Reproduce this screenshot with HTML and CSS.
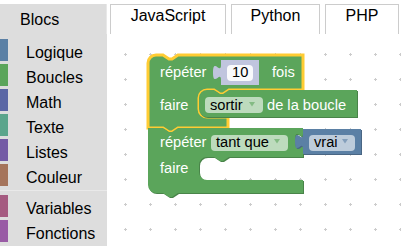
FILE: index.html
```html
<!DOCTYPE html>
<html lang="fr">
<head>
<meta charset="utf-8">
<title>Blockly</title>
<link rel="stylesheet" href="styles.css">
</head>
<body>
<div class="tabs">
  <div class="tab tab-on">Blocs</div>
  <div class="tab tab-js">JavaScript</div>
  <div class="tab tab-py">Python</div>
  <div class="tab tab-php">PHP</div>
</div>
<div class="main">
  <div class="toolbox">
    <div class="cat cat-logic">Logique</div>
    <div class="cat cat-loops">Boucles</div>
    <div class="cat cat-math">Math</div>
    <div class="cat cat-text">Texte</div>
    <div class="cat cat-lists">Listes</div>
    <div class="cat cat-colour">Couleur</div>
    <div class="sep"></div>
    <div class="cat cat-vars">Variables</div>
    <div class="cat cat-procs">Fonctions</div>
  </div>
  <div class="workspace">
    <svg class="ws-svg" width="294" height="212" viewBox="107 34 294 212" xmlns="http://www.w3.org/2000/svg">
      <defs>
        <pattern id="grid" patternUnits="userSpaceOnUse" width="25" height="25" x="124" y="53">
          <path d="M0 1.5h3M1.5 0v3" stroke="#ccc" stroke-width="1"/>
        </pattern>
      </defs>
      <rect x="107" y="34" width="294" height="212" fill="url(#grid)"/>

      <!-- block 1 : répéter 10 fois -->
      <path class="dark-green" transform="translate(1,1)" d="M148,63 A8,8 0 0 1 156,55 H163 l6,4 h3 l6,-4 H303 V90 H229 l-6,4 h-3 l-6,-4 H207 A8,8 0 0 0 199,98 V109 A8,8 0 0 0 207,117 H228 V128 H178 l-6,4 h-3 l-6,-4 H148 Z"/>
      <path class="green selected" d="M148,63 A8,8 0 0 1 156,55 H163 l6,4 h3 l6,-4 H303 V90 H229 l-6,4 h-3 l-6,-4 H207 A8,8 0 0 0 199,98 V109 A8,8 0 0 0 207,117 H228 V128 H178 l-6,4 h-3 l-6,-4 H148 Z"/>
      <text class="lbl" x="160" y="77">répéter</text>
      <path class="shadow" d="M221,60 H259 V85 H221 V80 c0,-10 -8,8 -8,-7.5 s8,2.5 8,-7.5 Z"/>
      <rect class="pill pill-num" x="227" y="65" width="26" height="16" rx="4"/>
      <text class="val" x="232" y="77">10</text>
      <text class="lbl" x="272" y="77">fois</text>
      <text class="lbl" x="160" y="110">faire</text>

      <!-- sortir de la boucle -->
      <path class="dark-green" transform="translate(1,1)" d="M199,98 A8,8 0 0 1 207,90 H214 l6,4 h3 l6,-4 H357 V117 H207 A8,8 0 0 1 199,109 Z"/>
      <path class="green" d="M199,98 A8,8 0 0 1 207,90 H214 l6,4 h3 l6,-4 H357 V117 H207 A8,8 0 0 1 199,109 Z"/>
      <rect class="pill" x="205" y="97" width="58" height="16" rx="4"/>
      <text class="val" x="210" y="110">sortir</text>
      <path class="arrow-green" d="M249,102 h6 l-3,4.5 Z"/>
      <text class="lbl" x="267" y="110">de la boucle</text>

      <!-- block 2 : répéter tant que -->
      <path class="dark-green" transform="translate(1,1)" d="M148,128 H163 l6,4 h3 l6,-4 H303 v5 c0,10 -8,-8 -8,7.5 s8,-2.5 8,7.5 V157 H229 l-6,4 h-3 l-6,-4 H207 A8,8 0 0 0 199,165 V172 A8,8 0 0 0 207,180 H303 V193 H178 l-6,4 h-3 l-6,-4 H156 A8,8 0 0 1 148,185 Z"/>
      <path class="green" d="M148,128 H163 l6,4 h3 l6,-4 H303 v5 c0,10 -8,-8 -8,7.5 s8,-2.5 8,7.5 V157 H229 l-6,4 h-3 l-6,-4 H207 A8,8 0 0 0 199,165 V172 A8,8 0 0 0 207,180 H303 V193 H178 l-6,4 h-3 l-6,-4 H156 A8,8 0 0 1 148,185 Z"/>
      <text class="lbl" x="160" y="147">répéter</text>
      <rect class="pill" x="211" y="135" width="77" height="16" rx="4"/>
      <text class="val" x="216" y="147">tant que</text>
      <path class="arrow-green" d="M274,139 h6 l-3,4.5 Z"/>
      <text class="lbl" x="160" y="173">faire</text>

      <!-- vrai -->
      <path class="dark-blue" transform="translate(1,1)" d="M303,129 H361 V154 H303 V149 c0,-10 -8,8 -8,-7.5 s8,2.5 8,-7.5 Z"/>
      <path class="blue" d="M303,129 H361 V154 H303 V149 c0,-10 -8,8 -8,-7.5 s8,2.5 8,-7.5 Z"/>
      <rect class="pill" x="309" y="135" width="46" height="16" rx="4"/>
      <text class="val" x="314" y="147">vrai</text>
      <path class="arrow-blue" d="M342,139 h6 l-3,4.5 Z"/>
    </svg>
  </div>
</div>
</body>
</html>
```

FILE: styles.css
```css
html, body {
  margin: 0;
  padding: 0;
  background: #fff;
}

body {
  width: 401px;
  height: 246px;
  overflow: hidden;
  font-family: "Liberation Sans", Arial, sans-serif;
  font-size: 16px;
  color: #000;
}

.tabs {
  display: flex;
  align-items: flex-end;
  height: 34px;
  padding-top: 4px;
  box-sizing: border-box;
}

.tab {
  box-sizing: border-box;
  height: 30px;
  border: 1px solid #ccc;
  border-bottom: none;
  text-align: center;
  line-height: 21px;
  white-space: nowrap;
}

.tab-on {
  width: 107px;
  background: #ddd;
  border: none;
  border-right: 1px solid #e8e8e8;
  text-align: left;
  padding-left: 20px;
  line-height: 31px;
  margin-right: 3px;
}

.tab-js {
  width: 116px;
  margin-right: 5px;
}

.tab-py {
  width: 89px;
  margin-right: 5px;
}

.tab-php {
  width: 74px;
}

.main {
  display: flex;
  height: 212px;
}

.toolbox {
  width: 107px;
  flex: none;
  background: #ddd;
  padding-top: 5px;
  box-sizing: border-box;
}

.cat {
  box-sizing: border-box;
  height: 22px;
  line-height: 22px;
  padding-top: 3px;
  margin-bottom: 3px;
  padding-left: 18px;
  border-left: 8px solid #888;
  white-space: nowrap;
}

.cat-logic { border-left-color: #5b80a5; }
.cat-loops { border-left-color: #5ba55b; }
.cat-math { border-left-color: #5b67a5; }
.cat-text { border-left-color: #5ba58c; }
.cat-lists { border-left-color: #745ba5; }
.cat-colour { border-left-color: #a5745b; }
.cat-vars { border-left-color: #a55b80; }
.cat-procs { border-left-color: #995ba5; }

.sep {
  border-bottom: 1px solid #e9e9e9;
  margin: 4px 0;
}

.workspace {
  flex: 1;
  background: #fff;
}

.ws-svg {
  display: block;
}

.green { fill: #5ba55b; }
.dark-green { fill: #498449; }
.blue { fill: #5b80a5; }
.dark-blue { fill: #496684; }
.shadow { fill: #c0c5de; }
.selected {
  stroke: #fc3;
  stroke-width: 3px;
}

.pill {
  fill: #fff;
  fill-opacity: 0.6;
}

.pill-num {
  fill-opacity: 0.9;
}

.lbl {
  fill: #fff;
  font-family: "Liberation Sans", Arial, sans-serif;
  font-size: 11pt;
}

.val {
  fill: #000;
  font-family: "Liberation Sans", Arial, sans-serif;
  font-size: 11pt;
}

.arrow-green { fill: #5ba55b; opacity: 0.6; }
.arrow-blue { fill: #5b80a5; opacity: 0.6; }
```
